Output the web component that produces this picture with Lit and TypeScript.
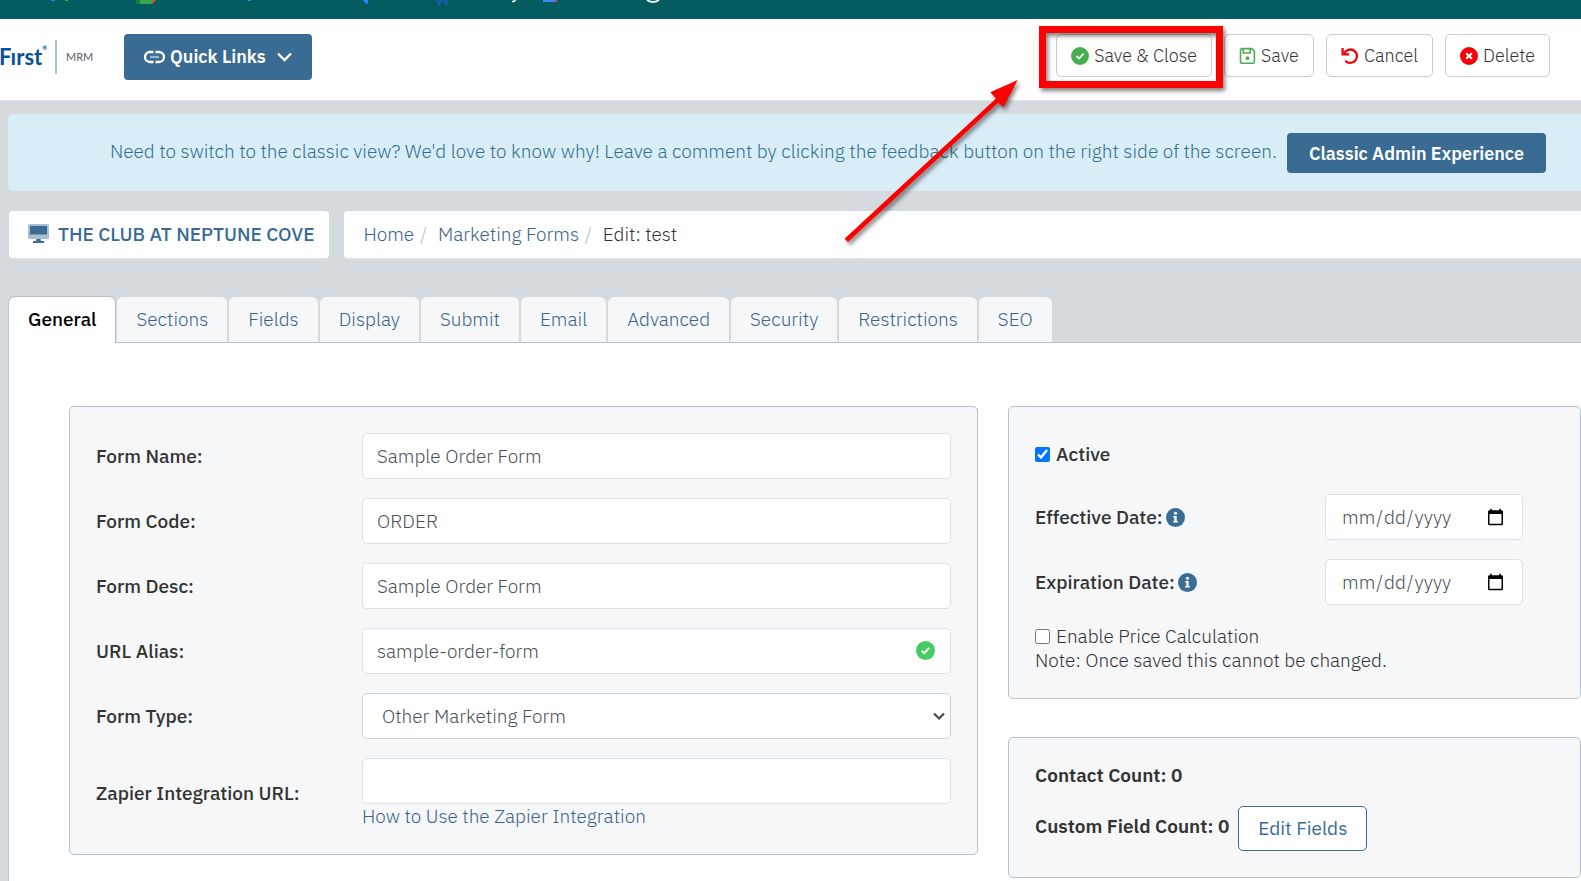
import { LitElement, html, css, svg, nothing } from "lit";
import { customElement, property } from "lit/decorators.js";
import { classMap } from "lit/directives/class-map.js";

const TABS = ["General", "Sections", "Fields", "Display", "Submit", "Email", "Advanced", "Security", "Restrictions", "SEO"];

interface Field {
  id: string;
  label: string;
  value: string;
  kind?: "select" | "valid" | "zapier";
}

const FIELDS: Field[] = [
  { id: "name", label: "Form Name:", value: "Sample Order Form" },
  { id: "code", label: "Form Code:", value: "ORDER" },
  { id: "desc", label: "Form Desc:", value: "Sample Order Form" },
  { id: "alias", label: "URL Alias:", value: "sample-order-form", kind: "valid" },
  { id: "type", label: "Form Type:", value: "Other Marketing Form", kind: "select" },
  { id: "zapier", label: "Zapier Integration URL:", value: "", kind: "zapier" },
];

const ICONS: Record<string, unknown> = {
  check: svg`<circle cx="9" cy="9" r="9" fill="currentColor"/><path d="M5.4 9.2 8 11.6l4.600-5" fill="none" stroke="#fff" stroke-width="1.800"/>`,
  save: svg`<path d="M2.200 1.200h11.300l2.800 2.800v11.300a1.300 1.300 0 0 1-1.300 1.300H2.900a1.300 1.300 0 0 1-1.300-1.300V2.500a1.300 1.300 0 0 1 1.300-1.300Z M4.500 1.500v4.300h7.400V1.500" fill="none" stroke="currentColor" stroke-width="1.700"/><circle cx="9" cy="11.300" r="2" fill="currentColor"/>`,
  undo: svg`<path d="M3.200 6.400A6.700 6.700 0 1 1 4.300 13.700" fill="none" stroke="currentColor" stroke-width="2.300"/><path d="M1.600 1v6.300h6.600" fill="none" stroke="currentColor" stroke-width="2.300"/>`,
  cross: svg`<circle cx="9" cy="9" r="9" fill="currentColor"/><path d="m6.200 6.200 5.600 5.600m0-5.600-5.600 5.600" stroke="#fff" stroke-width="2.200"/>`,
  info: svg`<circle cx="9" cy="9" r="9" fill="currentColor"/><circle cx="9" cy="5" r="1.500" fill="#fff"/><path d="M6.800 7.500h3.300v4.700h1.100v1.600H6.800v-1.600h1.100V9H6.800Z" fill="#fff"/>`,
};

const icon = (name: string) => html`<svg class="icon ${name}" viewBox="0 0 18 18" aria-hidden="true">${ICONS[name]}</svg>`;

const shared = css`
  * { box-sizing: border-box; }
  :host { display: block; }
  button, input, select { font: inherit; margin: 0; }
  a { color: #3b628a; text-decoration: none; }
  .icon { width: 18px; height: 18px; flex: none; }
`;

@customElement("page-header")
class PageHeader extends LitElement {
  static styles = [shared, css`
    .browser { height: 19px; background: #045c61; overflow: hidden; }
    .browser svg { display: block; }
    .header { display: flex; align-items: center; height: 82px; padding: 0 31px 9px 0; background: #fff; border-bottom: 1px solid #e4e6e8; }
    .logo { display: flex; align-items: center; gap: 10px; width: 124px; padding-top: 4px; line-height: 34px; font-family: Lato, sans-serif; font-weight: 400; }
    .brand { display: flex; align-items: flex-start; width: 46px; margin-left: -1px; font-size: 22px; font-weight: 700; color: #09509b; }
    .reg { font-size: 6px; line-height: 16px; }
    .mrm { padding-left: 9px; border-left: 2px solid #a5c3dd; font-size: 11px; color: #56606b; }
    .quick { display: flex; align-items: center; height: 46px; margin-top: 4px; padding: 0 20px; gap: 5px; border: 0; border-radius: 4px; background: #396b93; color: #fff; font-size: 18px; font-weight: 600; }
    .quick .chev { margin-left: 6px; }
    .actions { display: flex; gap: 12px; margin-left: auto; }
    .action { display: flex; align-items: center; gap: 5px; height: 43px; padding: 1px 14px 0; border: 1px solid #ccc; border-radius: 5px; background: #fff; color: #333; font-size: 18px; }
    .check, .save { color: #4aae50; }
    .save { width: 17px; }
    .undo, .cross { color: #f40008; }
    .marked { position: relative; }
    .frame { position: absolute; inset: -8px -11px -11px -17px; border: 7px solid #f00; filter: drop-shadow(2px 3px 2px rgba(0, 0, 0, .5)); pointer-events: none; }
    .arrow { position: absolute; z-index: 2; left: -216px; top: 41px; pointer-events: none; filter: drop-shadow(2px 3px 2px rgba(0, 0, 0, .5)); }
  `];

  render() {
    return html`
      <div class="browser">
        <svg width="700" height="19" aria-hidden="true">
          <path d="M51 0h4v1h-4z" fill="#2a7de1"/><path d="M65 0h3v1h-3z" fill="#34a853"/>
          <path d="M136 0h20l-4 4h-16z" fill="#34a853"/><path d="M136 0h4v4h-4z" fill="#188038"/><path d="M152 4v-4h4z" fill="#ea4335"/>
          <path d="M247 0h5l-2 1h-2z" fill="#0a9bd8"/><path d="M363 0h5v4q-4-1-5-4z" fill="#2684ff"/>
          <path d="m437 0 2 4 2-4m3 0 2 4 2-4" fill="none" stroke="#185abd" stroke-width="2"/>
          <path d="M512 1.500h2l2-2" fill="none" stroke="#fff" stroke-width="1.300"/>
          <path d="M543 0h12v2h-12z" fill="#4285f4"/><path d="M555 0h2v2h-2z" fill="#ea4335"/>
          <path d="M647 0q6 4 12 0" fill="none" stroke="#e8f0f0" stroke-width="2"/>
        </svg>
      </div>
      <header class="header">
        <div class="logo"><span class="brand">Fırst<span class="reg">®</span></span><span class="mrm">MRM</span></div>
        <button class="quick">
          <svg width="21" height="14" viewBox="0 0 21 14" fill="none" stroke="#fff" stroke-width="2.300" aria-hidden="true"><path d="M9.500 2H6a4.900 4.900 0 0 0 0 10h3.500M11.500 2H15a4.900 4.900 0 0 1 0 10h-3.500"/><path d="M6 7h9" opacity=".5"/></svg>
          Quick Links
          <svg class="chev" width="15" height="10" viewBox="0 0 15 10" fill="none" stroke="#fff" stroke-width="2.300" aria-hidden="true"><path d="m1 1.500 6.500 6.500L14 1.500"/></svg>
        </button>
        <div class="actions">
          <div class="marked">
            <button class="action">${icon("check")}Save &amp; Close</button>
            <div class="frame"></div>
            <svg class="arrow" width="190" height="175" aria-hidden="true"><path d="M4.500 163.700 156 23.500l-5.700-6.200L177.700 5l-14.400 27.300-5-4.800L8 167Z" fill="#f00"/></svg>
          </div>
          <button class="action">${icon("save")}Save</button>
          <button class="action">${icon("undo")}Cancel</button>
          <button class="action">${icon("cross")}Delete</button>
        </div>
      </header>`;
  }
}

@customElement("form-fields")
class FormFields extends LitElement {
  static styles = [shared, css`
    .fields { display: grid; gap: 19px; }
    .row { display: grid; grid-template-columns: 266fr 589fr; align-items: center; }
    .label { font-weight: 500; }
    .cell { position: relative; }
    .box { display: block; width: 100%; height: 46px; padding: 0 14px; border: 1px solid #dde1e6; border-radius: 5px; background: #fff; color: #495057; }
    .select { appearance: none; padding: 0 40px 0 19px; border-color: #cdd2d9; }
    .caret { position: absolute; right: 6px; top: 19px; pointer-events: none; }
    .check { position: absolute; right: 16px; top: 13px; width: 19px; height: 19px; color: #46cb63; }
    .hint { display: block; }
  `];

  private control(f: Field) {
    if (f.kind === "select") {
      return html`<select class="box select" id=${f.id}><option>${f.value}</option></select>
        <svg class="caret" width="12" height="9" viewBox="0 0 12 9" fill="none" stroke="#43494f" stroke-width="2.200" aria-hidden="true"><path d="m1 1.500 5 5 5-5"/></svg>`;
    }
    return html`<input class="box" id=${f.id} type="text" .value=${f.value}>
      ${f.kind === "valid" ? icon("check") : nothing}
      ${f.kind === "zapier" ? html`<a class="hint" href="#zapier">How to Use the Zapier Integration</a>` : nothing}`;
  }

  render() {
    return html`<div class="fields">${FIELDS.map((f) => html`
      <div class="row"><label class="label" for=${f.id}>${f.label}</label><div class="cell">${this.control(f)}</div></div>`)}</div>`;
  }
}

@customElement("form-status")
class FormStatus extends LitElement {
  static styles = [shared, css`
    .tick { display: flex; align-items: center; gap: 6px; }
    .tick input { width: 15px; height: 15px; }
    .active { margin: 9px 0 28px; font-weight: 500; }
    .dates { display: grid; grid-template-columns: 290px 198px; row-gap: 19px; align-items: center; margin-bottom: 19px; }
    .date-label { display: flex; align-items: center; gap: 3px; font-weight: 500; }
    .date { height: 46px; width: 100%; padding: 0 15px; border: 1px solid #dde1e6; border-radius: 5px; background: #fff; color: #495057; }
    .info { width: 19px; height: 19px; color: #396b93; }
  `];

  render() {
    return html`
      <label class="tick active"><input type="checkbox" checked>Active</label>
      <div class="dates">
        <label class="date-label" for="effective">Effective Date: ${icon("info")}</label><input class="date" id="effective" type="date">
        <label class="date-label" for="expiration">Expiration Date: ${icon("info")}</label><input class="date" id="expiration" type="date">
      </div>
      <label class="tick"><input type="checkbox">Enable Price Calculation</label>
      <div>Note: Once saved this cannot be changed.</div>`;
  }
}

@customElement("app-root")
class AppRoot extends LitElement {
  @property() active = "General";

  static styles = [shared, css`
    :host { min-height: 100vh; overflow: hidden; background: #d5dade; color: #333; font: 300 19px/24px "IBM Plex Sans", Roboto, sans-serif; }
    .banner { display: flex; align-items: center; justify-content: flex-end; gap: 10px; min-height: 77px; margin: 13px 0 20px 8px; padding: 0 35px 0 16px; border-radius: 5px 0 0 5px; background: #d9edf7; color: #31708f; }
    .banner-text { padding-bottom: 4px; }
    .classic { height: 40px; padding: 2px 22px 0; border: 0; border-radius: 4px; background: #396b93; color: #fff; font-size: 18px; font-weight: 600; white-space: nowrap; }
    .crumb-row { display: flex; gap: 15px; margin-left: 9px; }
    .site, .crumbs { display: flex; align-items: center; height: 48px; border-radius: 4px; background: #fff; border-bottom: 1px solid #e2e2e2; }
    .site { gap: 9px; padding: 0 15px 2px 19px; font-weight: 500; color: #396b93; white-space: nowrap; }
    .crumbs { flex: 1; padding: 0 19px 2px; gap: 6px; border-radius: 4px 0 0 4px; }
    .slash { padding-right: 5px; color: #bbb; }
    .tabs { display: flex; margin: 37px 0 0 8px; }
    .tab { height: 46px; padding: 0 19px 2px; border: 1px solid transparent; border-bottom: 0; border-radius: 7px 7px 0 0; background: #f5f7f9; background-clip: padding-box; color: #3b628a; font-weight: 300; }
    .tab.on { height: 47px; margin: 0 0 -1px 0; position: relative; border-color: #b7c1cb; background: #fff; color: #000; font-weight: 500; }
    .panel { margin-left: 8px; padding: 63px 0 40px 60px; border: 1px solid #b7c1cb; border-right: 0; background: #fff; }
    .columns { display: grid; grid-template-columns: minmax(0, 909fr) minmax(0, 573fr); gap: 30px; align-items: start; }
    .side { display: grid; gap: 38px; }
    .card { padding: 26px; border: 1px solid #b7c1cb; border-radius: 5px; background: #f5f7f9; }
    .counts { padding-top: 25px; font-weight: 600; }
    .count-row { display: flex; align-items: center; gap: 9px; margin-top: 19px; }
    .count { padding-bottom: 5px; }
    .edit { height: 45px; padding: 0 19px 2px; border: 1px solid #396b93; border-radius: 5px; background: #fff; color: #396b93; font-weight: 400; }
  `];

  render() {
    return html`
      <page-header></page-header>
      <div class="banner">
        <span class="banner-text">Need to switch to the classic view? We'd love to know why! Leave a comment by clicking the feedback button on the right side of the screen.</span>
        <button class="classic">Classic Admin Experience</button>
      </div>
      <div class="crumb-row">
        <div class="site">
          <svg width="21" height="19" viewBox="0 0 21 19" aria-hidden="true"><rect width="21" height="15" rx="1.500" fill="#a9c0d2"/><path d="M2 2h17v8.500H2zM8.500 15h4l.5 2h3v2H5v-2h3z" fill="#396b93"/></svg>
          THE CLUB AT NEPTUNE COVE
        </div>
        <nav class="crumbs" aria-label="Breadcrumb">
          <a href="#home">Home</a><span class="slash">/</span><a href="#forms">Marketing Forms</a><span class="slash">/</span><span>Edit: test</span>
        </nav>
      </div>
      <div class="tabs" role="tablist">
        ${TABS.map((t) => html`<button role="tab" aria-selected=${t === this.active} class=${classMap({ tab: true, on: t === this.active })} @click=${() => (this.active = t)}>${t}</button>`)}
      </div>
      <main class="panel">
        <div class="columns">
          <section class="card"><form-fields></form-fields></section>
          <div class="side">
            <section class="card"><form-status></form-status></section>
            <section class="card counts">
              <div>Contact Count: 0</div>
              <div class="count-row"><span class="count">Custom Field Count: 0</span><button class="edit">Edit Fields</button></div>
            </section>
          </div>
        </div>
      </main>`;
  }
}
